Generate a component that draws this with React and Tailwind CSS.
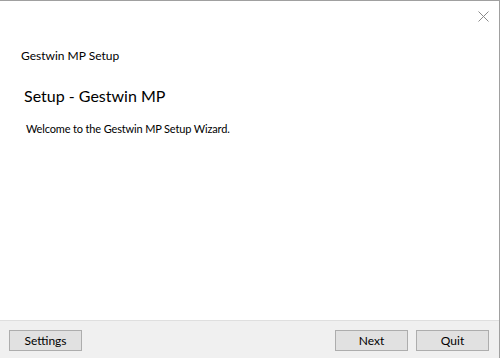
export default function App() {
  return (
    <div className="w-[500px] h-[358px] flex flex-col bg-white border-t border-r border-[#a0a0a0] overflow-hidden" style={{ fontFamily: 'Lato, "Liberation Sans", sans-serif' }}>
      <div className="flex-1 flex flex-col">
        <div className="flex justify-end pt-[10px] pr-[10px]">
          <svg width="11" height="11" viewBox="0 0 11 11" className="block">
            <path d="M0.5 0.5 L10.5 10.5 M10.5 0.5 L0.5 10.5" stroke="#8a8a8a" strokeWidth="1" fill="none" />
          </svg>
        </div>
        <div className="pl-[21px] mt-[26px] text-[12px] leading-[16px] text-black">Gestwin MP Setup</div>
        <div className="pl-[24px] mt-[21px] text-[16px] leading-[21px] text-[#000000]">Setup - Gestwin MP</div>
        <div className="pl-[26px] mt-[15px] text-[11px] tracking-[-0.15px] leading-[16px] text-black">Welcome to the Gestwin MP Setup Wizard.</div>
      </div>
      <div className="h-[38px] shrink-0 bg-[#f0f0f0] border-t border-[#dfdfdf] flex items-start pt-[9px] pl-[9px] pr-[10px] text-[12px] text-black">
        <button className="w-[73px] h-[21px] bg-[#e1e1e1] border border-[#adadad] leading-[19px]">Settings</button>
        <div className="flex-1" />
        <button className="w-[73px] h-[21px] bg-[#e1e1e1] border border-[#adadad] leading-[19px]">Next</button>
        <button className="w-[73px] h-[21px] bg-[#e1e1e1] border border-[#adadad] leading-[19px] ml-[8px]">Quit</button>
      </div>
    </div>
  );
}
